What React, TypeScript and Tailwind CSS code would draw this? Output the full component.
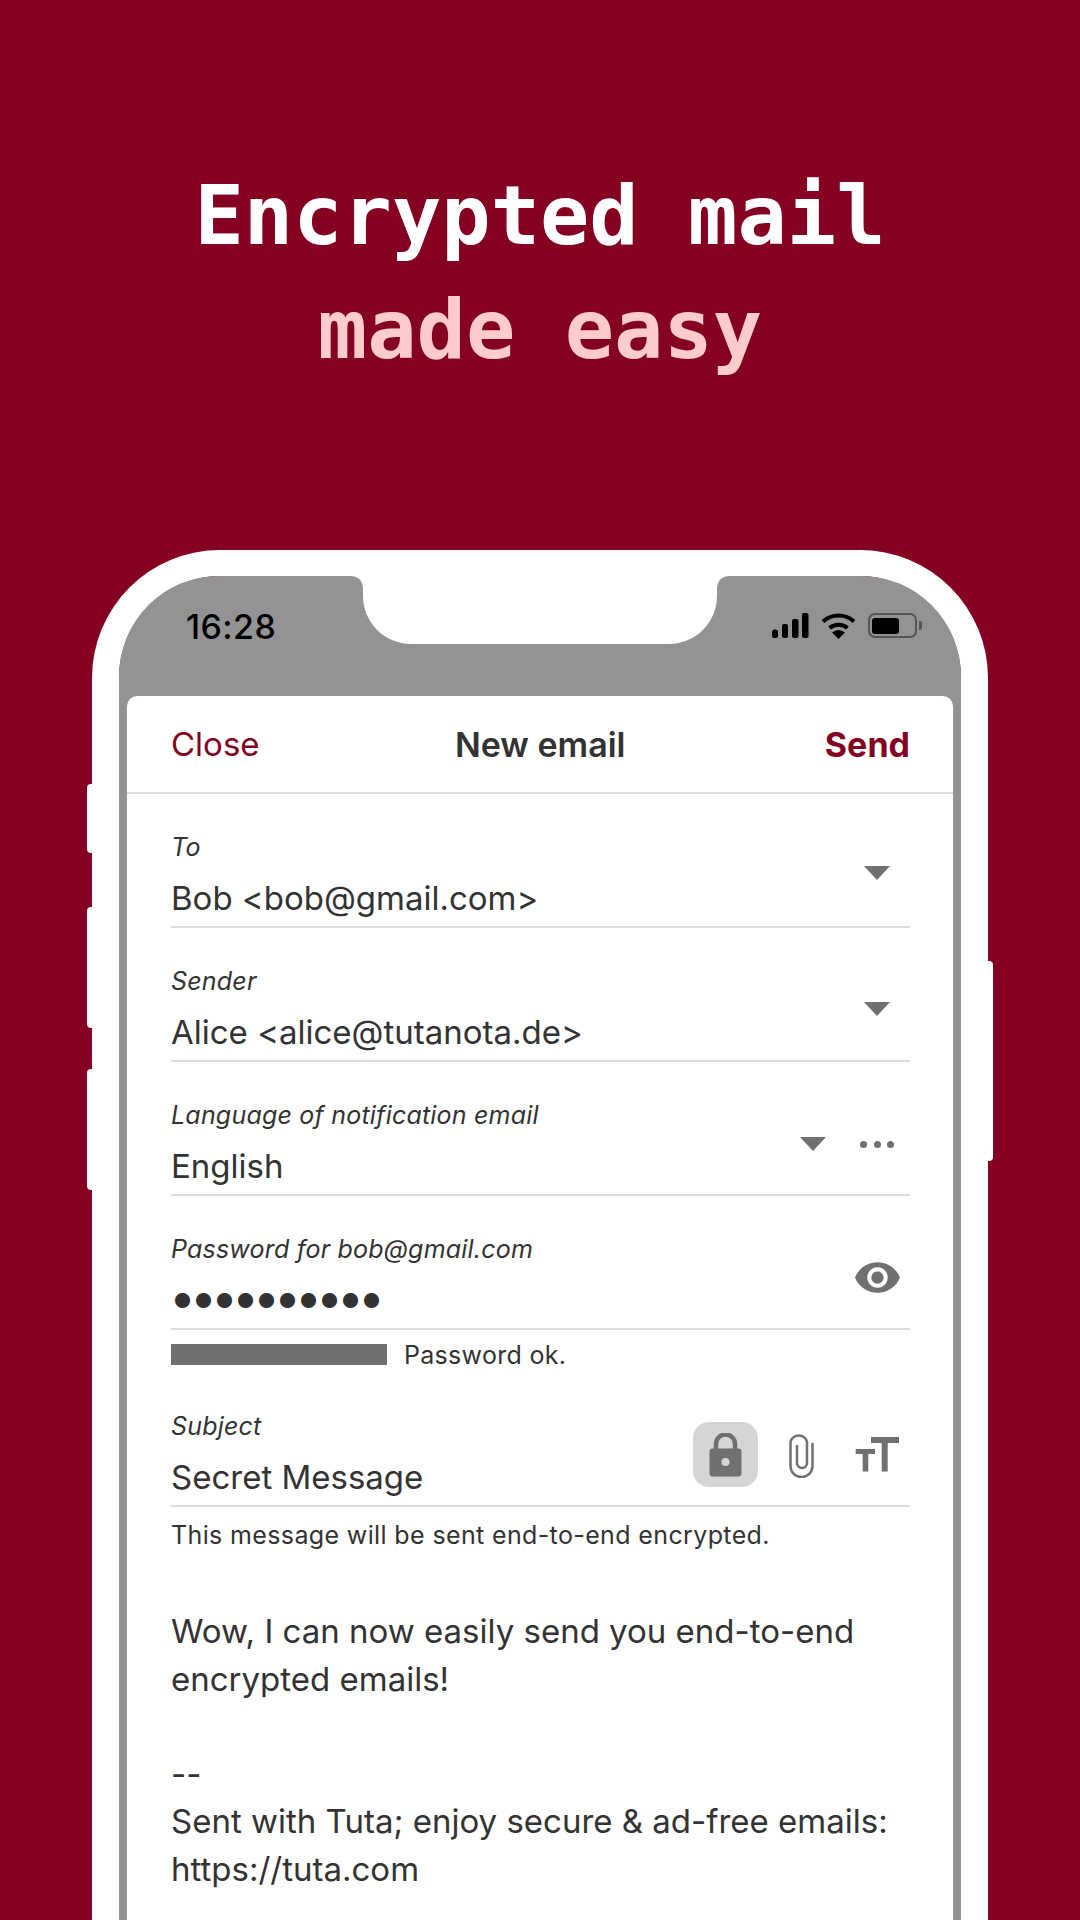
import type { ReactNode } from "react"

function SideButton({ className }: { className: string }) {
  return <div className={`absolute w-[8px] bg-white rounded-[4px] ${className}`} />
}

function Notch() {
  return (
    <svg className="absolute left-[231px] top-0" width="380" height="68" viewBox="0 0 380 68">
      <path
        d="M0 0Q13 0 13 14V20A48 48 0 0 0 61 68H319A48 48 0 0 0 367 20V14Q367 0 380 0Z"
        fill="#ffffff"
      />
    </svg>
  )
}

function StatusIcons() {
  return (
    <div className="flex items-center">
      <svg width="37" height="25" viewBox="0 0 37 25" fill="#000000">
        <rect x="0" y="16.5" width="6" height="8.5" rx="2.5" />
        <rect x="10" y="11" width="6" height="14" rx="2" />
        <rect x="20" y="6" width="6.5" height="19" rx="2" />
        <rect x="30" y="0" width="6.5" height="25" rx="2" />
      </svg>
      <svg className="ml-[12px]" width="35" height="27" viewBox="0 0 35 27">
        <path d="M2 9.5A23 23 0 0 1 33 9.5" fill="none" stroke="#000000" strokeWidth="4" />
        <path d="M8.5 16A14 14 0 0 1 26.5 16" fill="none" stroke="#000000" strokeWidth="4" />
        <path d="M17.5 27L11 20.5Q17.5 15.5 24 20.5Z" fill="#000000" />
      </svg>
      <div className="ml-[12px] flex items-center">
        <div className="flex h-[25px] w-[49px] items-center rounded-[7px] border-2 border-[#555555] p-[2px]">
          <div className="h-[16px] w-[27px] rounded-[3px] bg-black" />
        </div>
        <div className="ml-[2px] h-[9px] w-[3px] rounded-r-[2px] bg-[#555555]" />
      </div>
    </div>
  )
}

function Caret() {
  return (
    <svg width="26" height="14" viewBox="0 0 26 14" fill="#707070">
      <path d="M0 0H26L13 14Z" />
    </svg>
  )
}

function Field({
  label,
  value,
  children,
}: {
  label: string
  value: ReactNode
  children?: ReactNode
}) {
  return (
    <div className="relative h-[134px] border-b-2 border-[#dcdcdc]">
      <p className="pt-[37px] text-[25px] leading-[32px] tracking-[0.2px] italic text-[#333333]">
        {label}
      </p>
      <div className="mt-[15px] text-[33px] leading-[40px] text-[#333333]">{value}</div>
      {children}
    </div>
  )
}

export default function App() {
  return (
    <div className="relative h-[1920px] w-[1080px] overflow-hidden bg-[#850122] font-['Inter',sans-serif]">
      <div className="flex h-[550px] flex-col items-center pt-[159px] font-['DejaVu_Sans_Mono',monospace] text-[82px] leading-[114px] font-bold">
        <h1 className="text-white">Encrypted mail</h1>
        <h2 className="text-[#ffcccc]">made easy</h2>
      </div>

      <div className="relative ml-[92px] w-[896px]">
        <SideButton className="-left-[5px] top-[234px] h-[69px]" />
        <SideButton className="-left-[5px] top-[357px] h-[121px]" />
        <SideButton className="-left-[5px] top-[519px] h-[121px]" />
        <SideButton className="-right-[5px] top-[411px] h-[200px]" />

        <div className="rounded-t-[128px] border-[27px] border-t-[26px] border-b-0 border-white">
          <div className="relative h-[1400px] rounded-t-[100px] bg-[#939393] px-[8px] pt-[120px]">
            <Notch />
            <div className="absolute left-[67px] top-[31px] text-[34px] leading-[40px] tracking-[0.4px] font-medium text-black">
              16:28
            </div>
            <div className="absolute left-[653px] top-[36px]">
              <StatusIcons />
            </div>

            <div className="h-full rounded-t-[10px] bg-white">
              <div className="flex h-[98px] items-center justify-between border-b-2 border-[#dcdcdc] pr-[43px] pl-[44px] text-[33px]">
                <span className="mt-[2px] text-[#850122]">Close</span>
                <span className="mr-[4px] text-[34px] font-semibold text-[#333333]">New email</span>
                <span className="text-[34px] font-bold text-[#850122]">Send</span>
              </div>

              <div className="pr-[43px] pl-[44px]">
                <Field label="To" value="Bob <bob@gmail.com>">
                  <div className="absolute right-[20px] top-[72px]">
                    <Caret />
                  </div>
                </Field>
                <Field label="Sender" value="Alice <alice@tutanota.de>">
                  <div className="absolute right-[20px] top-[74px]">
                    <Caret />
                  </div>
                </Field>
                <Field label="Language of notification email" value="English">
                  <div className="absolute right-[84px] top-[75px]">
                    <Caret />
                  </div>
                  <div className="absolute right-[16px] top-[79px] flex gap-[6.5px]">
                    <div className="h-[7px] w-[7px] rounded-full bg-[#707070]" />
                    <div className="h-[7px] w-[7px] rounded-full bg-[#707070]" />
                    <div className="h-[7px] w-[7px] rounded-full bg-[#707070]" />
                  </div>
                </Field>
                <Field
                  label="Password for bob@gmail.com"
                  value={
                    <span className="-mt-[3px] -ml-[2px] block text-[48px] leading-[40px] tracking-[-6px]">
                      ••••••••••
                    </span>
                  }
                >
                  <svg
                    className="absolute right-[8px] top-[57px]"
                    width="49"
                    height="49"
                    viewBox="0 0 24 24"
                    fill="#707070"
                  >
                    <path d="M12 4.5C7 4.5 2.73 7.61 1 12c1.73 4.39 6 7.5 11 7.5s9.27-3.11 11-7.5c-1.73-4.39-6-7.5-11-7.5zM12 17c-2.76 0-5-2.24-5-5s2.24-5 5-5 5 2.24 5 5-2.24 5-5 5zm0-8c-1.66 0-3 1.34-3 3s1.34 3 3 3 3-1.34 3-3-1.34-3-3-3z" />
                  </svg>
                </Field>

                <div className="mt-[14px] mb-[8px] flex h-[21px] items-center">
                  <div className="h-[21px] w-[216px] bg-[#707070]" />
                  <span className="ml-[17px] text-[25px] leading-[32px] tracking-[0.3px] text-[#333333]">
                    Password ok.
                  </span>
                </div>

                <Field label="Subject" value="Secret Message">
                  <div className="absolute right-[152px] top-[49px] flex h-[65px] w-[65px] items-center justify-center rounded-[16px] bg-[#d5d5d5]">
                    <svg width="33" height="44" viewBox="0 0 33 44">
                      <path d="M7 18V11A9.5 9.5 0 0 1 26 11V18" fill="none" stroke="#707070" strokeWidth="4.5" />
                      <rect x="0.5" y="15.5" width="32" height="28" rx="3" fill="#707070" />
                      <circle cx="16.5" cy="29" r="4" fill="#d5d5d5" />
                    </svg>
                  </div>
                  <svg
                    className="absolute right-[96px] top-[59px]"
                    width="25"
                    height="46"
                    viewBox="0 0 25 46"
                    fill="none"
                    stroke="#707070"
                    strokeWidth="2.5"
                  >
                    <path d="M23.5 11V34A11 11 0 0 1 1.5 34V10A8.5 8.5 0 0 1 18 10V31A5 5 0 0 1 8 31V13" />
                  </svg>
                  <svg
                    className="absolute right-[11px] top-[64px]"
                    width="44"
                    height="35"
                    viewBox="0 0 44 35"
                    fill="#707070"
                  >
                    <rect x="16" y="0" width="28" height="6" />
                    <rect x="26.7" y="0" width="6" height="34.5" />
                    <rect x="0.7" y="12" width="19.3" height="5" />
                    <rect x="7.7" y="12" width="5.6" height="22.5" />
                  </svg>
                </Field>

                <p className="mt-[12px] text-[25px] leading-[32px] tracking-[0.37px] text-[#333333]">
                  This message will be sent end-to-end encrypted.
                </p>

                <div className="mt-[57px] text-[33px] leading-[47.5px] text-[#333333]">
                  <p>Wow, I can now easily send you end-to-end</p>
                  <p>encrypted emails!</p>
                  <p>&nbsp;</p>
                  <p>--</p>
                  <p>Sent with Tuta; enjoy secure &amp; ad-free emails:</p>
                  <p>https://tuta.com</p>
                </div>
              </div>
            </div>
          </div>
        </div>
      </div>
    </div>
  )
}
